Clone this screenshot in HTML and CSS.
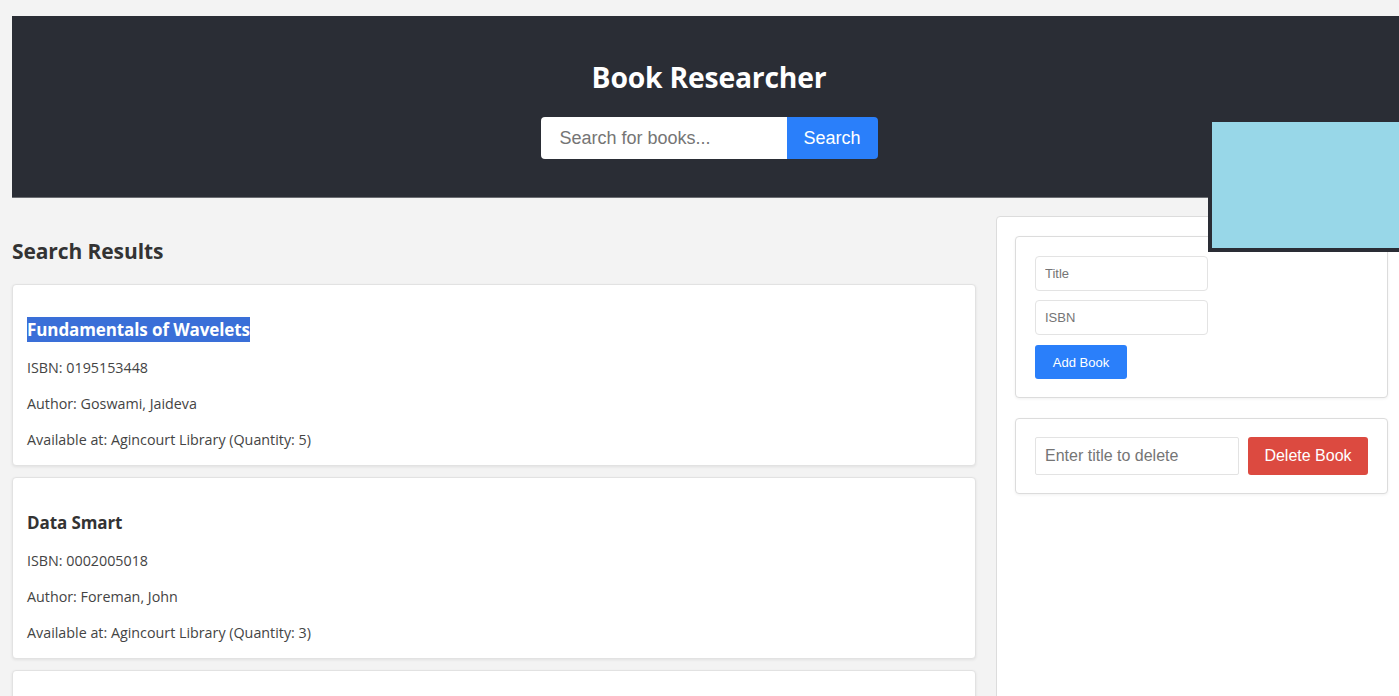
FILE: index.html
```html
<!DOCTYPE html>
<html lang="en">
<head>
<meta charset="utf-8">
<title>Book Researcher</title>
<link rel="stylesheet" href="styles.css">
</head>
<body>
<div class="page">
  <header class="hero">
    <h1 class="hero-title">Book Researcher</h1>
    <form class="search">
      <input class="search-input" type="text" placeholder="Search for books...">
      <button class="search-btn" type="button">Search</button>
    </form>
  </header>
  <div class="overlay-box"></div>
  <div class="content">
    <main class="results">
      <h2 class="results-title">Search Results</h2>
      <div class="card">
        <h3 class="book-title"><span class="selected">Fundamentals of Wavelets</span></h3>
        <p>ISBN: 0195153448</p>
        <p>Author: Goswami, Jaideva</p>
        <p>Available at: Agincourt Library (Quantity: 5)</p>
      </div>
      <div class="card">
        <h3 class="book-title">Data Smart</h3>
        <p>ISBN: 0002005018</p>
        <p>Author: Foreman, John</p>
        <p>Available at: Agincourt Library (Quantity: 3)</p>
      </div>
      <div class="card"></div>
    </main>
    <aside class="sidebar">
      <div class="panel">
        <input class="field" type="text" placeholder="Title">
        <input class="field" type="text" placeholder="ISBN">
        <button class="add-btn" type="button">Add Book</button>
      </div>
      <div class="panel panel-row">
        <input class="del-field" type="text" placeholder="Enter title to delete">
        <button class="del-btn" type="button">Delete Book</button>
      </div>
    </aside>
  </div>
</div>
</body>
</html>
```

FILE: styles.css
```css
html, body {
  margin: 0;
  padding: 0;
  overflow: hidden;
  background: #f3f3f3;
}
body {
  font-family: "Open Sans", "Noto Sans", sans-serif;
  color: #333;
}
.page {
  position: relative;
  width: 1394px;
  padding: 16px 0 0 12px;
}
.hero {
  background: #2a2d35;
  height: 182px;
  border-bottom: 1px solid #6b6d72;
  display: flex;
  flex-direction: column;
  align-items: center;
  box-sizing: border-box;
  padding-top: 41px;
}
.hero-title {
  margin: 0;
  color: #fff;
  font-size: 28.3px;
  font-weight: 700;
  line-height: 40px;
  letter-spacing: -0.2px;
}
.search {
  display: flex;
  margin-top: 20px;
}
.search-input {
  width: 246px;
  height: 42px;
  box-sizing: border-box;
  border: none;
  border-radius: 4px 0 0 4px;
  padding: 0 19px;
  font-family: "Liberation Sans", Arial, sans-serif;
  font-size: 18px;
  outline: none;
}
.search-input::placeholder { color: #757575; }
.search-btn {
  width: 91px;
  height: 42px;
  border: none;
  border-radius: 0 4px 4px 0;
  background: #2a7ffa;
  color: #fff;
  font-family: "Liberation Sans", Arial, sans-serif;
  font-size: 18px;
}
.overlay-box {
  position: absolute;
  left: 1208px;
  top: 118px;
  width: 200px;
  height: 126px;
  background: #98d7e8;
  border: 4px solid #2a2d35;
  border-right: none;
}
.content {
  display: flex;
  gap: 20px;
  margin-top: 18px;
  align-items: flex-start;
}
.results {
  width: 964px;
  flex: none;
}
.results-title {
  margin: 20px 0 18px;
  font-size: 21px;
  font-weight: 700;
  line-height: 30px;
  letter-spacing: -0.1px;
}
.card {
  background: #fff;
  border: 1px solid #e2e2e2;
  border-radius: 4px;
  box-shadow: 0 1px 3px rgba(0,0,0,0.08);
  padding: 33px 14px 16px;
  margin-bottom: 11px;
  height: 182px;
  box-sizing: border-box;
}
.book-title {
  margin: 0;
  font-size: 17px;
  font-weight: 700;
  line-height: 24px;
  letter-spacing: -0.1px;
}
.selected {
  background: #3a6fd8;
  color: #fff;
  padding: 1px 0 1px;
}
.card p {
  margin: 15px 0 0;
  font-size: 14.3px;
  line-height: 21px;
  color: #444;
}
.sidebar {
  flex: 1;
  background: #fff;
  border: 1px solid #dcdcdc;
  border-radius: 4px;
  padding: 19px 18px;
  height: 520px;
  display: flex;
  flex-direction: column;
  gap: 20px;
}
.panel {
  border: 1px solid #dcdcdc;
  border-radius: 4px;
  box-shadow: 0 1px 3px rgba(0,0,0,0.06);
  padding: 19px 19px 18px;
  display: flex;
  flex-direction: column;
  align-items: flex-start;
  gap: 9px;
  background: #fff;
}
.field {
  width: 173px;
  height: 35px;
  box-sizing: border-box;
  border: 1px solid #e3e3e3;
  border-radius: 4px;
  padding: 0 9px;
  font-family: "Liberation Sans", Arial, sans-serif;
  font-size: 13px;
  outline: none;
}
.field::placeholder { color: #757575; }
.add-btn {
  margin-top: 1px;
  width: 92px;
  height: 34px;
  border: none;
  border-radius: 3px;
  background: #2a7ffa;
  color: #fff;
  font-family: "Liberation Sans", Arial, sans-serif;
  font-size: 13px;
}
.panel-row {
  flex-direction: row;
  align-items: center;
  gap: 9px;
  padding: 18px 19px 18px;
}
.del-field {
  width: 204px;
  height: 38px;
  box-sizing: border-box;
  border: 1px solid #e3e3e3;
  border-radius: 2px;
  padding: 0 9px;
  font-family: "Liberation Sans", Arial, sans-serif;
  font-size: 16px;
  outline: none;
}
.del-field::placeholder { color: #757575; }
.del-btn {
  width: 120px;
  height: 38px;
  border: none;
  border-radius: 3px;
  background: #dc4a40;
  color: #fff;
  font-family: "Liberation Sans", Arial, sans-serif;
  font-size: 16px;
}
```
